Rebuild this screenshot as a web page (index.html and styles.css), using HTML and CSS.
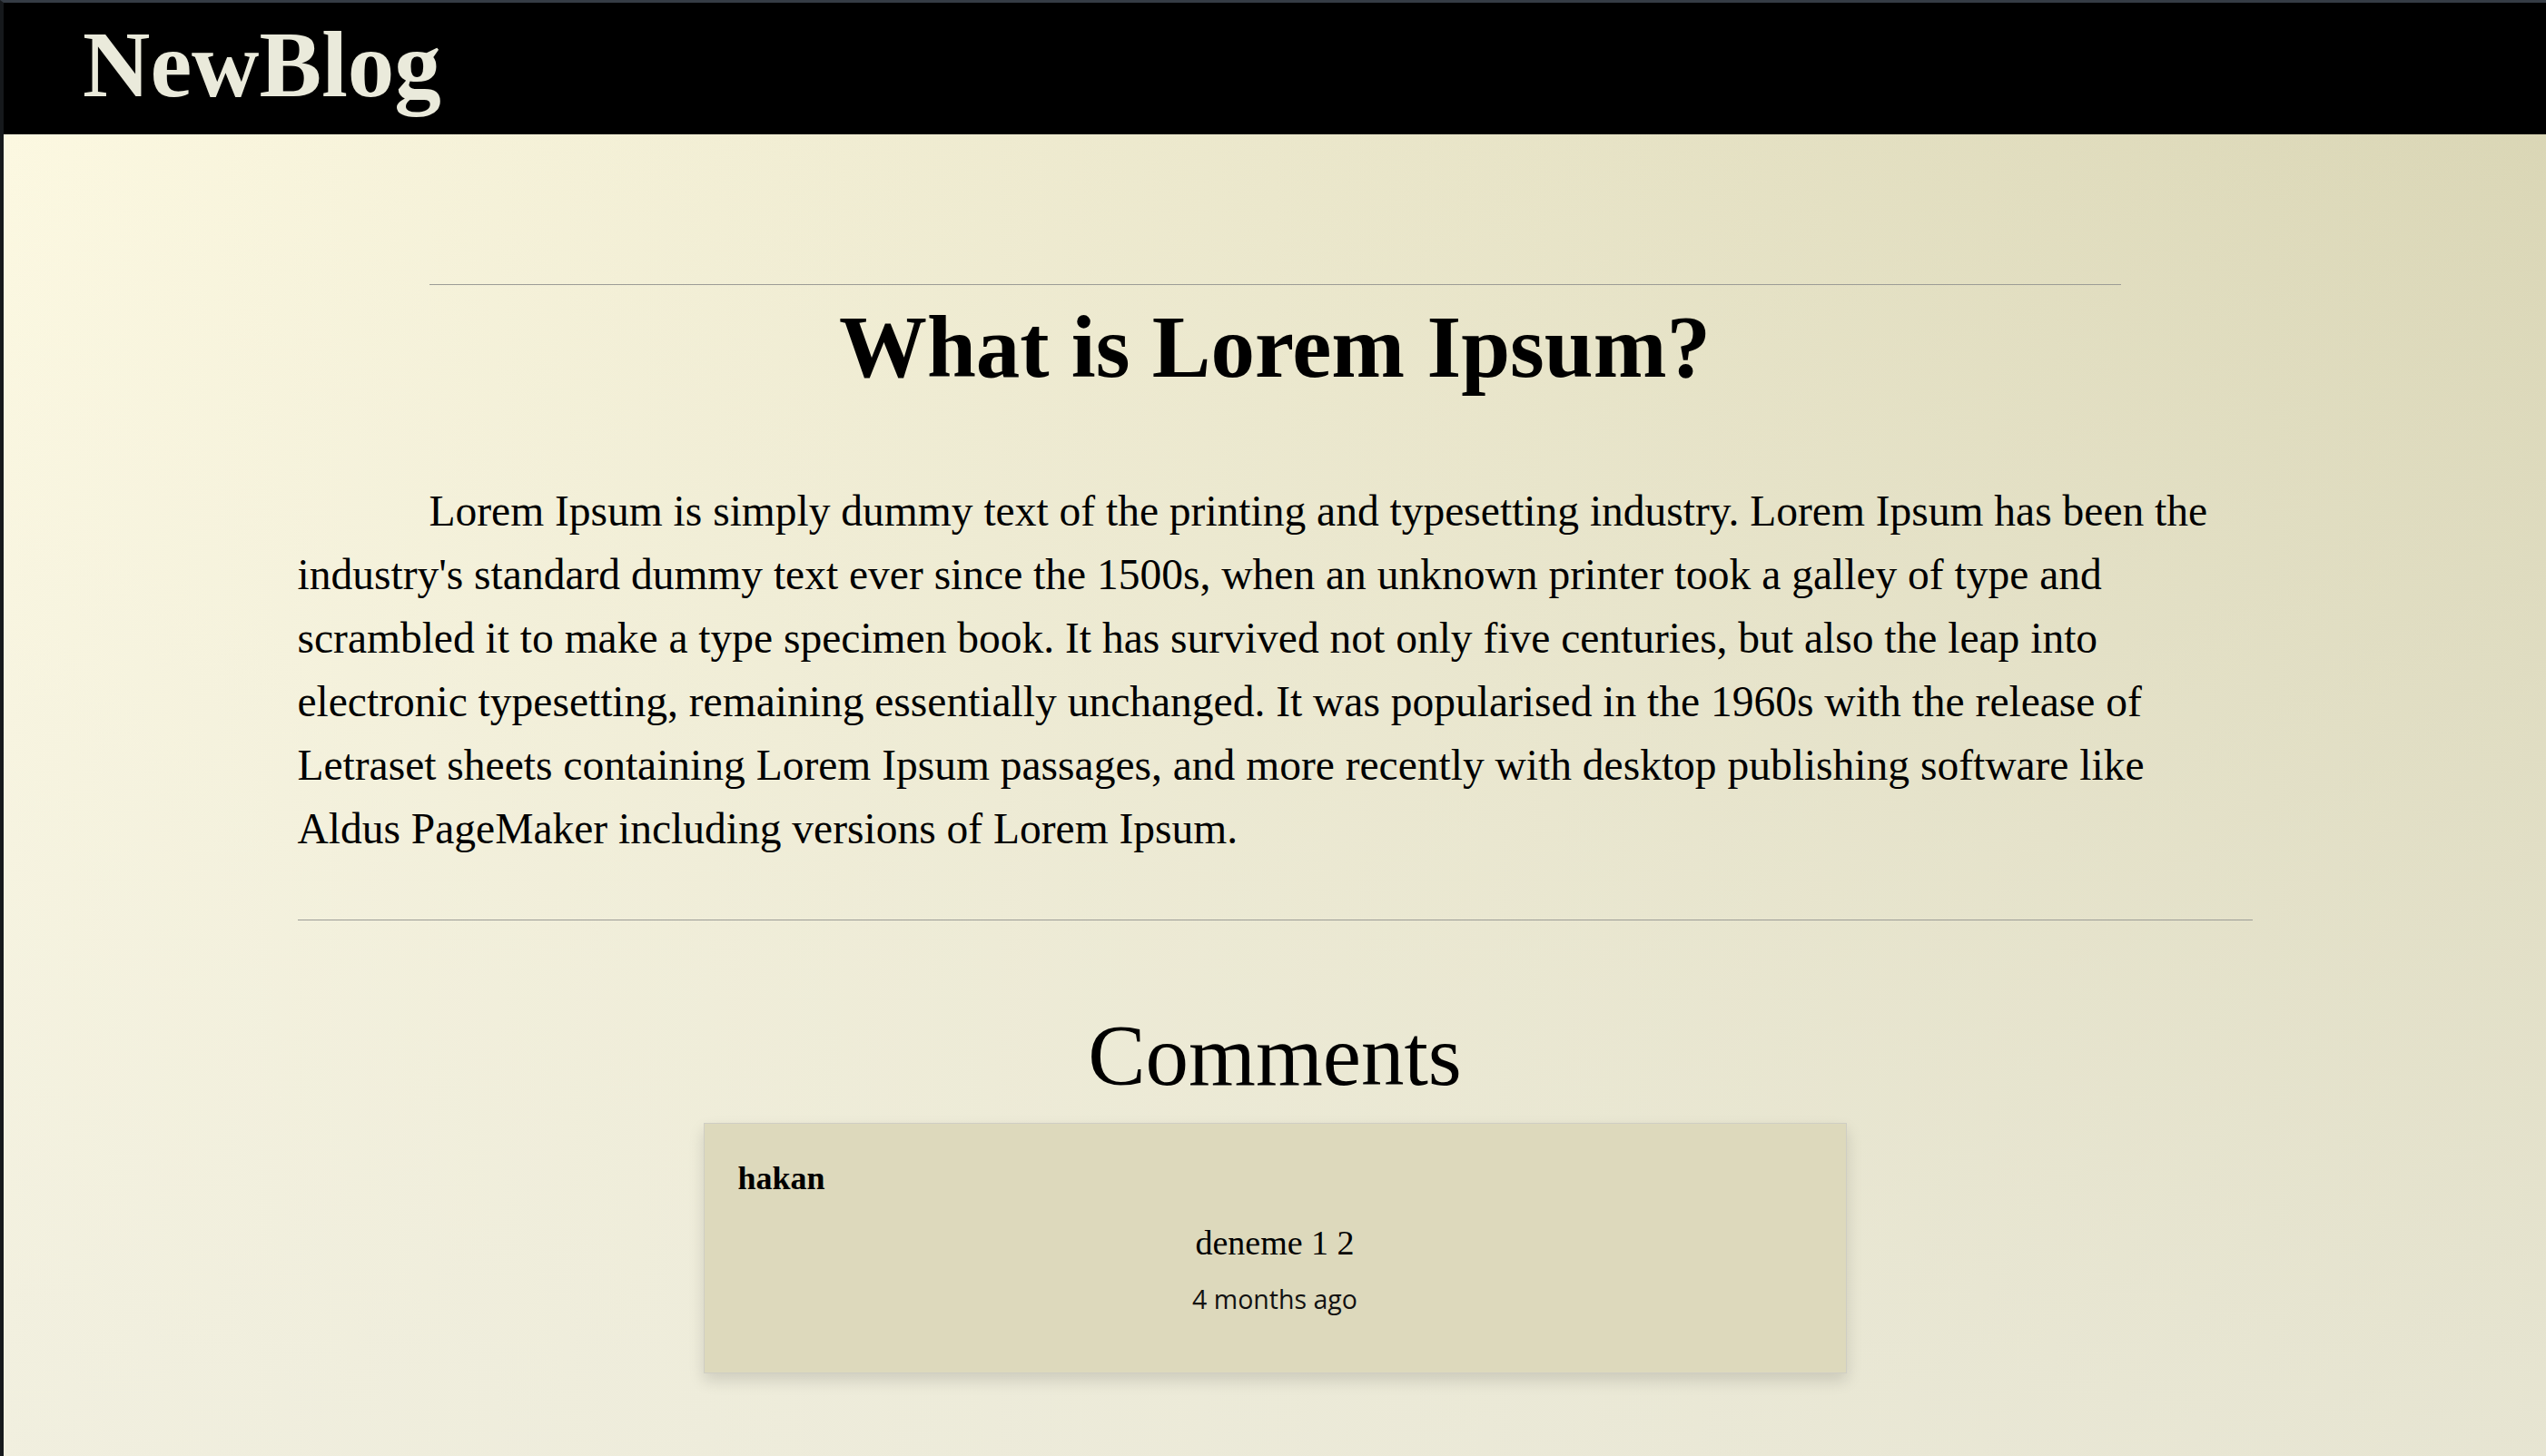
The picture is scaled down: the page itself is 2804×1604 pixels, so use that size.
FILE: index.html
```html
<!DOCTYPE html>
<html lang="en">
<head>
<meta charset="utf-8">
<title>NewBlog</title>
<link rel="stylesheet" href="styles.css">
</head>
<body>
<header class="topbar">
  <div class="brand">NewBlog</div>
</header>
<main class="post">
  <hr class="rule rule-top">
  <h1 class="post-title">What is Lorem Ipsum?</h1>
  <p class="post-body">Lorem Ipsum is simply dummy text of the printing and typesetting industry. Lorem Ipsum has been the industry's standard dummy text ever since the 1500s, when an unknown printer took a galley of type and scrambled it to make a type specimen book. It has survived not only five centuries, but also the leap into electronic typesetting, remaining essentially unchanged. It was popularised in the 1960s with the release of Letraset sheets containing Lorem Ipsum passages, and more recently with desktop publishing software like Aldus PageMaker including versions of Lorem Ipsum.</p>
  <hr class="rule rule-bottom">
  <section class="comments">
    <h2 class="comments-title">Comments</h2>
    <div class="comment-card">
      <div class="comment-author">hakan</div>
      <div class="comment-text">deneme 1 2</div>
      <div class="comment-time">4 months ago</div>
    </div>
  </section>
</main>
</body>
</html>
```
FILE: styles.css
```css
* {
  box-sizing: border-box;
}

html {
  height: 100%;
}

body {
  margin: 0;
  min-height: 100%;
  border-top: 3px solid #353c45;
  border-left: 4px solid #16191c;
  font-family: "Liberation Serif", "Times New Roman", serif;
  color: #000;
  background:
    linear-gradient(to bottom, rgba(236, 235, 222, 0) 0%, rgba(236, 235, 222, 0.72) 100%),
    linear-gradient(to right, #fdf9e1 0%, #d9d5b3 100%);
}

.topbar {
  height: 145px;
  background: #000;
  padding: 0 0 9px 87px;
}

.brand {
  font-size: 103px;
  font-weight: 700;
  line-height: 136px;
  color: #eaeadb;
}

.post {
  width: 2153px;
  margin: 0 auto;
  padding-top: 165px;
  padding-bottom: 90px;
}

.rule {
  border: 0;
  height: 1px;
  margin: 0;
  background: #9c9c96;
}

.rule-top {
  margin: 0 145px;
}

.post-title {
  margin: 14px 0 0;
  font-size: 97px;
  line-height: 110px;
  font-weight: 700;
  text-align: center;
}

.post-body {
  margin: 90px 13px 65px 0;
  font-size: 47.5px;
  line-height: 70px;
  text-indent: 145px;
}

.comments {
  display: flex;
  flex-direction: column;
  align-items: center;
}

.comments-title {
  margin: 94px 0 19px;
  font-size: 95px;
  line-height: 110px;
  font-weight: 400;
}

.comment-card {
  width: 1259px;
  padding: 38px 37px 61px;
  background: #ddd9bc;
  border: 1px solid #cfcec4;
  box-shadow: 0 8px 16px rgba(0, 0, 0, 0.13);
}

.comment-author {
  font-size: 36px;
  line-height: 44px;
  font-weight: 700;
}

.comment-text {
  margin-top: 27px;
  font-size: 38px;
  line-height: 44px;
  text-align: center;
}

.comment-time {
  margin-top: 20px;
  font-family: "Open Sans", "Noto Sans", sans-serif;
  font-size: 28.5px;
  line-height: 40px;
  text-align: center;
  color: #111;
}
```
